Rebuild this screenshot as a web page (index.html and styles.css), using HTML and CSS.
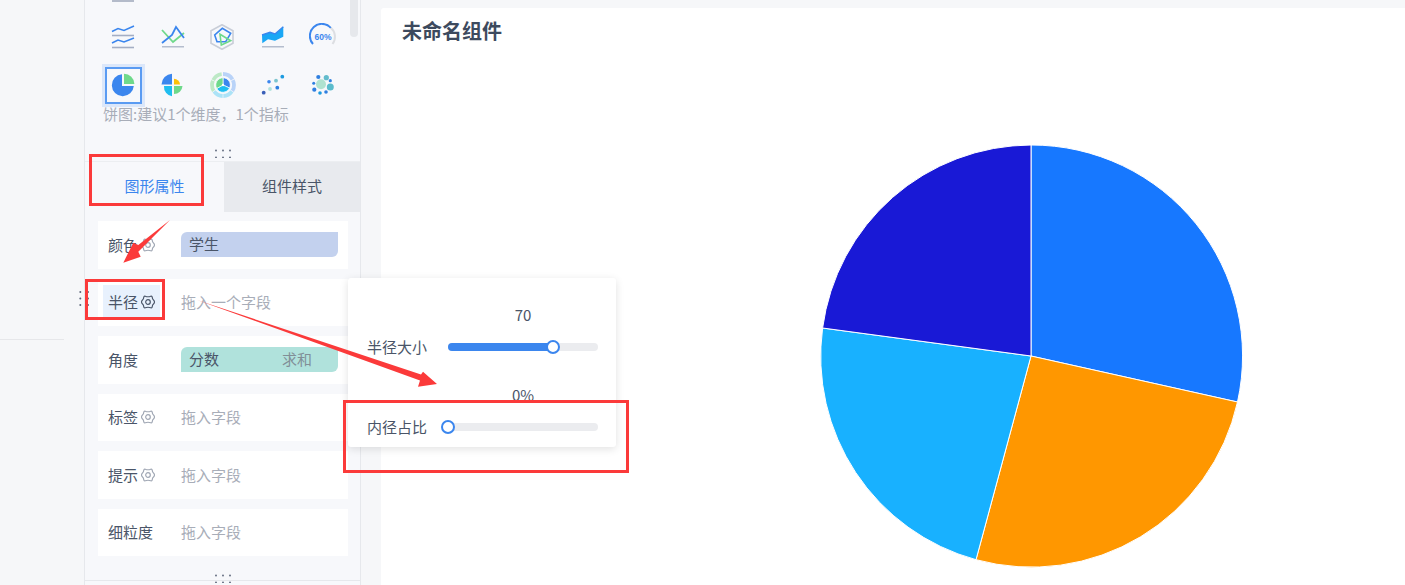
FILE: index.html
```html
<!DOCTYPE html>
<html lang="zh-CN">
<head>
<meta charset="utf-8">
<title>未命名组件</title>
<link rel="stylesheet" href="styles.css">
</head>
<body>
<svg class="defs" width="0" height="0" aria-hidden="true">
  <symbol id="gear" viewBox="0 0 14 14">
    <path d="M4.3 1.2Q7 2.3 9.700 1.200Q10.600 .9 11.100 1.700Q11.200 4.100 13.100 5.700Q13.800 7 13.100 8.300Q11.200 9.900 11.100 12.300Q10.600 13.100 9.700 12.800Q7 11.700 4.300 12.800Q3.400 13.100 2.900 12.300Q2.800 9.900 .9 8.300Q.2 7 .9 5.700Q2.800 4.100 2.900 1.700Q3.400 .9 4.300 1.200Z" fill="none" stroke="currentColor" stroke-width="1.200" stroke-linejoin="round"/>
    <circle cx="7" cy="7" r="2.300" fill="none" stroke="currentColor" stroke-width="1.200"/>
  </symbol>
  <symbol id="handle" viewBox="0 0 16 10">
    <circle cx="1" cy="2.5" r=".9"/><circle cx="8" cy="2.5" r=".9"/><circle cx="15" cy="2.5" r=".9"/>
    <circle cx="1" cy="9.5" r=".9"/><circle cx="8" cy="9.5" r=".9"/><circle cx="15" cy="9.5" r=".9"/>
  </symbol>
</svg>

<div class="app">
  <aside class="nav">
    <div class="nav-rule"></div>
  </aside>

  <section class="panel">
    <div class="scrollbar"></div>
    <div class="types">
      <div class="stub"></div>
      <div class="type-grid">
        <div class="type">
          <svg width="24" height="24" viewBox="0 0 24 24" fill="none" stroke-width="1.6">
            <path d="M1 6.5L7 3.500L13 5.500L23 1" stroke="#3b86ee"/><path d="M1 10.500H23" stroke="#a4aec4"/>
            <path d="M1 18L7 15L13 17L23 13" stroke="#3b86ee"/><path d="M1 22.500H23" stroke="#a4aec4"/>
          </svg>
        </div>
        <div class="type">
          <svg width="24" height="24" viewBox="0 0 24 24" fill="none" stroke-width="1.800">
            <path d="M1 5L12 17L23 8" stroke="#6fd98b"/>
            <path d="M1 18L11 10L15 2L23 13" stroke="#3b86ee"/>
            <path d="M1 21.800H23" stroke="#a4aec4" stroke-width="1.200"/>
          </svg>
        </div>
        <div class="type">
          <svg width="26" height="26" viewBox="0 0 26 26" fill="none" stroke-width="1.600">
            <path d="M12 .7L23 6.700V19.300L12 25.300L1 19.300V6.700Z" stroke="#c9ced8" fill="#f7f8fb"/>
            <path d="M12.300 4.300L20.700 9.300L15.700 17.700H7L4.700 11Z" stroke="#3b86ee"/>
            <path d="M10 10.300L20.700 16.700L11.300 21Z" stroke="#6fd98b"/>
          </svg>
        </div>
        <div class="type">
          <svg width="24" height="24" viewBox="0 0 24 24" fill="none">
            <path d="M1 10L9 7.300L14 9L22.300 1.700V11.700L14 15.700L7 14.300L1.300 18.300Z" fill="#1aa7f5"/>
            <path d="M1 10L9 7.300L14 9L22.300 1.700" stroke="#3b86ee" stroke-width="1.400"/>
            <path d="M1 21.800H23" stroke="#a4aec4" stroke-width="1.200"/>
          </svg>
        </div>
        <div class="type">
          <svg width="28" height="28" viewBox="0 0 28 28" fill="none" stroke-width="2">
            <path d="M21.800 4.800A11.800 11.800 0 0 1 23.500 21" stroke="#dcdee2"/>
            <path d="M4 21A11.800 11.800 0 0 1 21.800 4.800" stroke="#3b86ee"/>
            <text class="gauge-text" x="14" y="17">60%</text>
          </svg>
        </div>
        <div class="type type-on">
          <span class="type-box">
            <svg width="24" height="24" viewBox="0 0 24 24">
              <path d="M11 1.200A11 11 0 1 0 22.800 13H11Z" fill="#3b86ee"/>
              <path d="M13 .8A10.400 10.400 0 0 1 23.400 11H13Z" fill="#6fd98b"/>
            </svg>
          </span>
        </div>
        <div class="type">
          <svg width="24" height="24" viewBox="0 0 24 24">
            <path d="M11 .8V11.600H.5A11 11 0 0 1 11 .8Z" fill="#3b86ee"/>
            <path d="M13 5.800A6 6 0 0 1 19 11.600H13Z" fill="#ffc107"/>
            <path d="M11 13V23.300A9.600 9.600 0 0 1 3 13Z" fill="#1fbdf0"/>
            <path d="M13 13H21.500A8.500 8.500 0 0 1 13 21Z" fill="#6fd98b"/>
          </svg>
        </div>
        <div class="type">
          <svg width="26" height="26" viewBox="0 0 26 26" fill="none">
            <g stroke-width="3.800" transform="rotate(-90 13 13)">
              <circle cx="13" cy="13" r="11" stroke="#b9d3f8" pathLength="100" stroke-dasharray="16.500 1 16.500 66"/>
              <circle cx="13" cy="13" r="11" stroke="#ace3f7" pathLength="100" stroke-dasharray="14.500 1 14.500 70" stroke-dashoffset="-35"/>
              <circle cx="13" cy="13" r="11" stroke="#bde9c6" pathLength="100" stroke-dasharray="15.500 1 15.500 68" stroke-dashoffset="-66"/>
            </g>
            <path d="M13 13V5.800A7.200 7.200 0 0 1 19.600 16Z" fill="#3b86ee" stroke="#fff" stroke-width=".7"/>
            <path d="M13 13L19.600 16A7.200 7.200 0 0 1 6.700 16.500Z" fill="#1fbdf0" stroke="#fff" stroke-width=".7"/>
            <path d="M13 13L6.700 16.500A7.200 7.200 0 0 1 13 5.800Z" fill="#6fd98b" stroke="#fff" stroke-width=".7"/>
            <circle cx="13" cy="13" r="1.200" fill="#fff"/>
          </svg>
        </div>
        <div class="type">
          <svg width="24" height="24" viewBox="0 0 24 24">
            <circle cx="21.300" cy="3.700" r="1.900" fill="#1d9be0"/>
            <circle cx="15" cy="7.700" r="1.900" fill="#7cc5cf"/>
            <circle cx="8" cy="8.700" r="1.800" fill="#3b86ee"/>
            <circle cx="16.300" cy="14.700" r="1.900" fill="#2f7fe0"/>
            <circle cx="9" cy="16" r="1.900" fill="#b0e2dc"/>
            <circle cx="2.700" cy="19.700" r="1.900" fill="#3a5fb8"/>
          </svg>
        </div>
        <div class="type">
          <svg width="24" height="24" viewBox="0 0 24 24">
            <circle cx="10" cy="11.300" r="5" fill="#b0e2d0"/>
            <circle cx="19.300" cy="14" r="3.500" fill="#5bbccc"/>
            <circle cx="15.300" cy="4.700" r="2.600" fill="#63bccc"/>
            <circle cx="7.300" cy="4" r="2.100" fill="#2f7fe0"/>
            <circle cx="19.300" cy="7.700" r="1.600" fill="#2f7fe0"/>
            <circle cx="2.700" cy="10.300" r="1.500" fill="#2f7fe0"/>
            <circle cx="3.300" cy="16.700" r="2.100" fill="#2f7fe0"/>
            <circle cx="9" cy="20" r="1.800" fill="#1d9be0"/>
            <circle cx="15" cy="19" r="1.800" fill="#2f7fe0"/>
          </svg>
        </div>
      </div>
      <p class="hint">饼图:建议1个维度&#xFF0C;1个指标</p>
      <svg class="handle" width="16" height="10"><use href="#handle"/></svg>
    </div>

    <div class="tabs">
      <div class="tab tab-on">图形属性</div>
      <div class="tab">组件样式</div>
    </div>

    <div class="fields">
      <div class="field">
        <div class="label">颜色<svg class="gear" width="14" height="14"><use href="#gear"/></svg></div>
        <div class="chip chip-blue"><span>学生</span></div>
      </div>
      <div class="field">
        <div class="label label-on">半径<svg class="gear gear-on" width="14" height="14"><use href="#gear"/></svg></div>
        <div class="holder">拖入一个字段</div>
      </div>
      <div class="field">
        <div class="label">角度</div>
        <div class="chip chip-green"><span>分数</span><span class="chip-sub">求和</span></div>
      </div>
      <div class="field">
        <div class="label">标签<svg class="gear" width="14" height="14"><use href="#gear"/></svg></div>
        <div class="holder">拖入字段</div>
      </div>
      <div class="field">
        <div class="label">提示<svg class="gear" width="14" height="14"><use href="#gear"/></svg></div>
        <div class="holder">拖入字段</div>
      </div>
      <div class="field">
        <div class="label">细粒度</div>
        <div class="holder">拖入字段</div>
      </div>
    </div>

    <div class="panel-foot">
      <svg class="handle foot-handle" width="16" height="10"><use href="#handle"/></svg>
    </div>
  </section>

  <main class="canvas">
    <h1 class="title">未命名组件</h1>
    <svg class="pie" width="424" height="424" viewBox="820 144 424 424">
      <g stroke="#fff" stroke-width="1">
        <path d="M1031 356V145A211 211 0 0 1 1237.500 402Z" fill="#1778ff"/>
        <path d="M1031 356L1237.500 402A211 211 0 0 1 976 559.700Z" fill="#ff9700"/>
        <path d="M1031 356L976 559.700A211 211 0 0 1 822.600 328Z" fill="#18b1ff"/>
        <path d="M1031 356L822.600 328A211 211 0 0 1 1031 145Z" fill="#1919d6"/>
      </g>
    </svg>
  </main>
</div>

<div class="popover">
  <div class="pop-row">
    <span class="pop-value">70</span>
    <span class="pop-label">半径大小</span>
    <div class="slider">
      <div class="slider-fill" style="width:70%"></div>
      <div class="slider-thumb" style="left:70%"></div>
    </div>
  </div>
  <div class="pop-row">
    <span class="pop-value">0%</span>
    <span class="pop-label">内径占比</span>
    <div class="slider">
      <div class="slider-fill" style="width:0%"></div>
      <div class="slider-thumb" style="left:0%"></div>
    </div>
  </div>
</div>

<svg class="side-grip" width="10" height="18" viewBox="0 0 10 18">
  <circle cx="1.300" cy="2" r="1"/><circle cx="9" cy="2" r="1"/>
  <circle cx="1.300" cy="8.500" r="1"/><circle cx="9" cy="8.500" r="1"/>
  <circle cx="1.300" cy="15" r="1"/><circle cx="9" cy="15" r="1"/>
</svg>

<svg class="marks" width="1405" height="585" viewBox="0 0 1405 585">
  <g fill="none" stroke="#fb3a3a" stroke-width="3">
    <rect x="90.500" y="155.500" width="112" height="49"/>
    <rect x="86.500" y="280.500" width="77" height="38"/>
    <rect x="344.500" y="401.500" width="283" height="70"/>
  </g>
  <g fill="#fb3a3a">
    <path d="M170 220L138.300 251.700L140.700 256.700L123.300 262.700L133.300 242.700L138.300 245Z"/>
    <path d="M197 300L421 374.500L423 371.700L437 384L418 386.700L420 380.500Z"/>
  </g>
</svg>
</body>
</html>
```

FILE: styles.css
```css
* { box-sizing: border-box; }

html, body {
  margin: 0;
  height: 585px;
  overflow: hidden;
}

body {
  position: relative;
  background: #f6f7f9;
  color: #4a5568;
  font-family: "Noto Sans CJK SC", "Liberation Sans", sans-serif;
  font-size: 15px;
  line-height: 20px;
}

.defs { position: absolute; }

.app {
  display: flex;
  height: 585px;
  overflow: hidden;
}

/* left navigation strip */
.nav {
  flex: 0 0 84px;
  padding-top: 339px;
}

.nav-rule {
  width: 64px;
  height: 1px;
  background: #e6e7ea;
}

/* property panel */
.panel {
  position: relative;
  flex: 0 0 277px;
  background: #f7f8fb;
  border-left: 1px solid #e6e8ec;
  border-right: 1px solid #e6e8ec;
}

.scrollbar {
  position: absolute;
  top: 0;
  left: 265px;
  width: 8px;
  height: 37px;
  background: #e6e8ec;
  border-radius: 0 0 4px 4px;
}

.types {
  height: 161px;
}

.stub {
  width: 22px;
  height: 2px;
  margin-left: 27px;
  background: #b4bbca;
}

.type-grid {
  display: grid;
  grid-template-columns: repeat(5, 50px);
  grid-auto-rows: 48px;
  margin: 11px 0 0 13px;
}

.type {
  display: flex;
  align-items: center;
  justify-content: center;
}

.type-box {
  display: flex;
  align-items: center;
  justify-content: center;
  width: 37px;
  height: 37px;
  border: 2px solid #5a9bf2;
  outline: 3px solid #dbe7fa;
}

.gauge-text {
  fill: #3b86ee;
  font-family: "Liberation Sans", sans-serif;
  font-size: 8.500px;
  font-weight: 700;
  text-anchor: middle;
}

.hint {
  margin: 0 0 0 18px;
  height: 12px;
  line-height: 10px;
  color: #a8adb8;
  white-space: nowrap;
}

.handle {
  display: block;
  margin: 27px auto 0;
  fill: #5a6478;
}

.tabs {
  display: flex;
  height: 51px;
  border-top: 1px solid #eceef1;
}

.tab {
  display: flex;
  align-items: center;
  justify-content: center;
  flex: 0 0 136px;
  padding-bottom: 2px;
  background: #e8eaee;
}

.tab-on {
  flex: 0 0 139px;
  background: transparent;
  color: #3b86ee;
}

.fields {
  display: flex;
  flex-direction: column;
  gap: 10px;
  width: 250px;
  margin: 9px 0 0 13px;
}

.field {
  display: grid;
  grid-template-columns: 83px 1fr;
  align-items: center;
  height: 47.5px;
  background: #fff;
}

.label {
  display: flex;
  align-items: center;
  gap: 3px;
  width: 57px;
  height: 35px;
  margin-left: 5px;
  padding: 0 0 0 5px;
  white-space: nowrap;
}

.label-on { background: #e8f1fd; }

.gear {
  flex: none;
  color: #a0a7b4;
}

.gear-on { color: #4a5568; }

.holder {
  color: #a8adb8;
}

.chip {
  display: flex;
  align-items: center;
  justify-content: space-between;
  width: 157px;
  height: 25px;
  padding: 0 26px 1px 8px;
  border-radius: 6px 0 6px 0;
}

.chip-blue { background: #c3d1ee; }
.chip-green { background: #b0e2dc; }
.chip-sub { color: #818f97; }

.panel-foot {
  height: 5px;
  margin-top: 24px;
  border-top: 1px solid #e6e8ec;
}

.foot-handle {
  margin-top: -8px;
}

/* chart canvas */
.canvas {
  flex: 0 0 1024px;
  margin: 8px 0 0 20px;
  padding: 10px 0 0 21px;
  background: #fff;
  border-radius: 3px 0 0 0;
}

.title {
  margin: 0;
  color: #3d4a5e;
  font-size: 20px;
  font-weight: 700;
  line-height: 26px;
}

.pie {
  display: block;
  margin: 100px 0 0 418px;
}

/* overlays */
.popover {
  position: absolute;
  top: 278px;
  left: 348px;
  display: flex;
  flex-direction: column;
  gap: 28px;
  width: 268px;
  height: 169px;
  padding: 27px 18px 10px 19px;
  background: #fff;
  border-radius: 3px;
  box-shadow: 0 2px 8px rgba(0, 0, 0, 0.12);
}

.pop-row {
  display: grid;
  grid-template-columns: 81px 150px;
  align-items: center;
  row-gap: 12px;
}

.pop-value {
  grid-column: 2;
  text-align: center;
  line-height: 20px;
}

.pop-label {
  white-space: nowrap;
}

.slider {
  position: relative;
  height: 8px;
  background: #ebecef;
  border-radius: 4px;
}

.slider-fill {
  height: 8px;
  background: #3b86ee;
  border-radius: 4px;
}

.slider-thumb {
  position: absolute;
  top: -3px;
  width: 14px;
  height: 14px;
  margin-left: -7px;
  background: #fff;
  border: 2px solid #3b86ee;
  border-radius: 50%;
}

.side-grip {
  position: absolute;
  top: 290px;
  left: 79px;
  fill: #5a6478;
}

.marks {
  position: absolute;
  top: 0;
  left: 0;
  pointer-events: none;
}
```
